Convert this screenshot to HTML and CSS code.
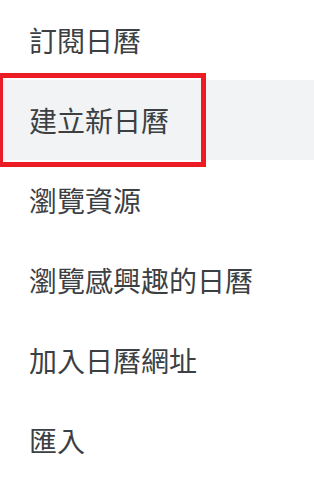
FILE: index.html
```html
<!DOCTYPE html>
<html lang="zh-Hant">
<head>
  <meta charset="UTF-8">
  <meta name="viewport" content="width=device-width, initial-scale=1.0">
  <title>日曆選單</title>
  <link rel="stylesheet" href="styles.css">
</head>
<body>
  <ul class="menu">
    <li class="menu-item">訂閱日曆</li>
    <li class="menu-item active">建立新日曆<span class="mark"></span></li>
    <li class="menu-item">瀏覽資源</li>
    <li class="menu-item">瀏覽感興趣的日曆</li>
    <li class="menu-item">加入日曆網址</li>
    <li class="menu-item">匯入</li>
  </ul>
</body>
</html>
```

FILE: styles.css
```css
body {
  margin: 0;
  background-color: #fff;
  font-family: "Noto Sans CJK TC", "Noto Sans", sans-serif;
}

.menu {
  list-style: none;
  margin: 0;
  padding: 0;
}

.menu-item {
  position: relative;
  height: 80px;
  line-height: 80px;
  padding-left: 29px;
  font-size: 28px;
  color: #3c4043;
}

.menu-item.active {
  background-color: #f1f3f4;
}

/* red highlight frame drawn over the row */
.mark {
  position: absolute;
  left: -2px;
  top: -7px;
  width: 198px;
  height: 84px;
  border: 5px solid #ec1c24;
}
```
